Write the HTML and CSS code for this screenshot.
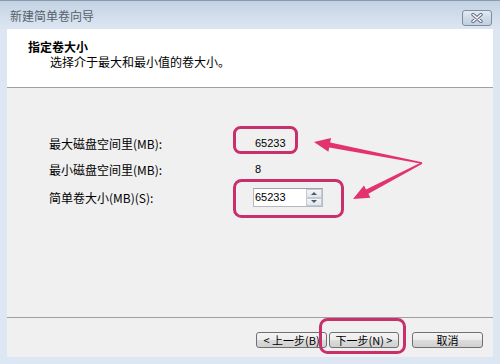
FILE: index.html
```html
<!DOCTYPE html>
<html lang="zh-CN">
<head>
  <meta charset="UTF-8">
  <title>新建简单卷向导</title>
  <link rel="stylesheet" href="styles.css">
</head>
<body>
  <div class="window">
    <div class="titlebar">
      <span class="title">新建简单卷向导</span>
      <span class="close">
        <svg width="14" height="10" viewBox="0 0 14 10">
          <path d="M3 1.5 L11 8.5 M11 1.5 L3 8.5" stroke="#5d6a7c" stroke-width="3.4" stroke-linecap="round"/>
          <path d="M3 1.5 L11 8.5 M11 1.5 L3 8.5" stroke="#ffffff" stroke-width="1.6" stroke-linecap="round"/>
        </svg>
      </span>
    </div>

    <div class="client">
      <div class="header">
        <div class="h-title">指定卷大小</div>
        <div class="h-sub">选择介于最大和最小值的卷大小。</div>
      </div>

      <div class="body">
        <div class="row">
          <span class="label">最大磁盘空间里(MB):</span>
          <span class="value">65233</span>
        </div>
        <div class="row row-2">
          <span class="label">最小磁盘空间里(MB):</span>
          <span class="value">8</span>
        </div>
        <div class="row row-3">
          <span class="label">简单卷大小(MB)(S):</span>
          <div class="spin">
            <span class="spin-text">65233</span>
            <div class="spin-btns">
              <span class="spin-btn"><i class="tri-up"></i></span>
              <span class="spin-btn"><i class="tri-down"></i></span>
            </div>
          </div>
        </div>
      </div>

      <div class="footer">
        <button class="btn">&lt; 上一步(B)</button>
        <button class="btn btn-next">下一步(N) &gt;</button>
        <button class="btn btn-cancel">取消</button>
      </div>
    </div>

    <!-- annotation marks drawn over the dialog -->
    <svg class="marks" width="500" height="364" viewBox="0 0 500 364">
      <g fill="none" stroke="#c92f6b" stroke-width="3">
        <rect x="234.5" y="127.5" width="62" height="25" rx="6"/>
        <rect x="234.5" y="180.5" width="108" height="36" rx="7"/>
        <rect x="320.5" y="319.5" width="84" height="33" rx="7"/>
      </g>
      <g fill="#e2336e">
        <polygon points="314,142 331,138 330.2,142.4 422.1,162.2 421.9,163.8 329.2,147.4 328.4,151.8"/>
        <polygon points="353,199 364,185.4 366,189.4 421.6,162.3 422.4,163.7 368.4,193.8 370.4,197.8"/>
      </g>
    </svg>
  </div>
</body>
</html>
```

FILE: styles.css
```css
body {
  margin: 0;
  padding: 0;
  font-family: "Noto Sans CJK SC", "Noto Sans", sans-serif;
  font-size: 12px;
  color: #000;
  background: #dce7f3;
}
.window {
  position: relative;
  width: 500px;
  height: 364px;
  background: #dce7f3;
  overflow: hidden;
}
.titlebar {
  height: 29px;
  display: flex;
  justify-content: space-between;
  align-items: flex-start;
  padding: 0 8px 0 10px;
  box-sizing: border-box;
  background: linear-gradient(#c3d2e3, #d3dfec 60%, #dbe6f2);
  border-top: 1px solid #8a9bb0;
}
.title {
  margin-top: 7px;
  line-height: 16px;
  font-size: 12px;
  color: #56606c;
}
.close {
  margin-top: 9px;
  width: 30px;
  height: 16px;
  box-sizing: border-box;
  border: 1px solid #7d8ca1;
  border-radius: 3px;
  background: linear-gradient(#e3ebf4, #cfdae7 50%, #c3d0df);
  display: flex;
  justify-content: center;
  align-items: center;
}
.client {
  margin: 0 7px;
  height: 328px;
  display: flex;
  flex-direction: column;
}
.header {
  height: 59px;
  flex: none;
  box-sizing: border-box;
  background: #fff;
  border-bottom: 1px solid #a0a0a0;
  padding: 10px 0 0 21px;
}
.h-title {
  font-weight: bold;
  line-height: 16px;
}
.h-sub {
  line-height: 14px;
  padding-left: 22px;
}
.body {
  height: 230px;
  flex: none;
  box-sizing: border-box;
  background: #f0f0f0;
  border-bottom: 1px solid #a0a0a0;
  padding: 45px 0 0 42px;
}
.row {
  display: flex;
  align-items: center;
  height: 20px;
}
.row-2 {
  margin-top: 6px;
}
.row-3 {
  margin-top: 9px;
  height: 19px;
}
.label {
  width: 204px;
  flex: none;
}
.value {
  padding-left: 2px;
  font-family: "Liberation Sans", Arial, sans-serif;
  font-size: 11px;
}
.spin {
  width: 70px;
  height: 19px;
  box-sizing: border-box;
  display: flex;
  border: 1px solid #b5b9c2;
  border-top-color: #9ea3ad;
  background: #fff;
}
.spin-text {
  flex: 1;
  padding-left: 1px;
  line-height: 17px;
  font-family: "Liberation Sans", Arial, sans-serif;
  font-size: 11px;
}
.spin-btns {
  width: 16px;
  display: flex;
  flex-direction: column;
}
.spin-btn {
  flex: 1;
  display: flex;
  justify-content: center;
  align-items: center;
  border: 1px solid #c4cad3;
  background: linear-gradient(#f4f5f7, #e2e5ea);
}
.tri-up,
.tri-down {
  width: 0;
  height: 0;
  border-left: 3px solid transparent;
  border-right: 3px solid transparent;
}
.tri-up {
  border-bottom: 3px solid #4b5a73;
}
.tri-down {
  border-top: 3px solid #4b5a73;
}
.footer {
  flex: 1;
  background: #f0f0f0;
  display: flex;
  align-items: center;
  justify-content: flex-end;
  padding: 4px 10px 0 0;
  gap: 2px;
}
.btn {
  width: 71px;
  height: 16px;
  padding: 0;
  margin: 0;
  font-family: "Noto Sans CJK SC", "Noto Sans", sans-serif;
  font-size: 11px;
  line-height: 14px;
  white-space: nowrap;
  color: #000;
  border: 1px solid #707070;
  border-radius: 3px;
  background: linear-gradient(#f4f4f4, #ececec 48%, #dcdcdc 52%, #d0d0d0);
}
.btn-next {
  width: 70px;
}
.btn-cancel {
  margin-left: 11px;
}
.marks {
  position: absolute;
  left: 0;
  top: 0;
  pointer-events: none;
}
```
